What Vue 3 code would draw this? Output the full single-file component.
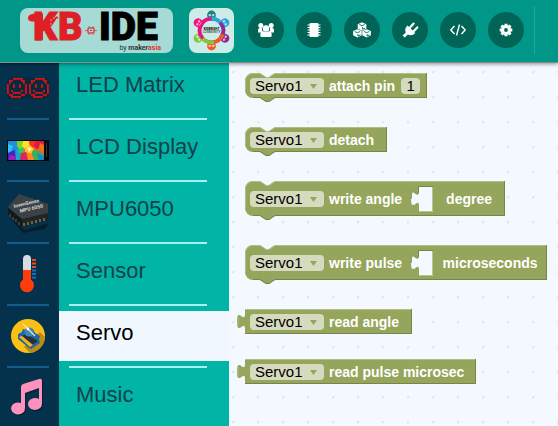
<script setup>
import { ref } from 'vue'

const selected = ref('Servo')
const categories = [
  { name: 'LED Matrix', icon: 'matrix' },
  { name: 'LCD Display', icon: 'lcd' },
  { name: 'MPU6050', icon: 'chip' },
  { name: 'Sensor', icon: 'sensor' },
  { name: 'Servo', icon: 'servo' },
  { name: 'Music', icon: 'music' },
]

const face = [
  '...#####..',
  '.##....##.',
  '.#......#.',
  '#..#..#..#',
  '#..#..#..#',
  '#........#',
  '#.#....#.#',
  '#..####..#',
  '.##....##.',
  '..#####...',
]
const leds = []
face.forEach((row, y) => {
  const line = row + '.' + row
  for (let x = 0; x < line.length; x++) if (line[x] === '#') leds.push({ x: x * 2, y: y * 2 })
})

const people = [
  { angle: 0, color: '#17828a' },
  { angle: 60, color: '#27a9e0' },
  { angle: 120, color: '#92278f' },
  { angle: 180, color: '#f15a24' },
  { angle: 240, color: '#7ac943' },
  { angle: 300, color: '#ed1282' },
]

const blocks = [
  { id: 'attach', x: 16, y: 10, w: 182, h: 25, label: 'attach pin', field: '1' },
  { id: 'detach', x: 16, y: 64, w: 142, h: 25, label: 'detach' },
  { id: 'angle', x: 16, y: 118, w: 260, h: 35, label: 'write angle', socket: true, unit: 'degree' },
  { id: 'pulse', x: 16, y: 182, w: 302, h: 35, label: 'write pulse', socket: true, unit: 'microseconds' },
  { id: 'readAngle', x: 16, y: 246, w: 167, h: 25, label: 'read angle', output: true },
  { id: 'readPulse', x: 16, y: 296, w: 231, h: 25, label: 'read pulse microsec', output: true },
]

function outline(b) {
  if (b.output) return `M0,0 H${b.w} V${b.h} H0 V20 c0,-10 -8,8 -8,-7.5 s8,2.5 8,-7.5 Z`
  return `M0,8 A8,8 0 0 1 8,0 H15 l6,4 h3 l6,-4 H${b.w} V${b.h} H30 l-6,4 h-3 l-6,-4 H8 a8,8 0 0 1 -8,-8 Z`
}
function highlight(b) {
  if (b.output) return `M0,.5 H${b.w - 1} M-7,8 V17`
  return `M.5,${b.h - 8} V8 A7.5,7.5 0 0 1 8,.5 H15 l6,4 h3 l6,-4 H${b.w - 1}`
}
function shade(b) {
  const right = b.w - 0.5
  const bottom = b.h - 0.5
  if (b.output) return `M${right},0 V${bottom} H0`
  return `M${right},0 V${bottom} H30 l-6,4 h-3 l-6,-4 H8`
}
</script>

<template>
  <div class="app">
    <header class="bar">
      <a class="logo" href="#" aria-label="KB-IDE by makerasia">
        <svg viewBox="0 0 153 45">
          <path d="M8 10q0-3 4-4l8-1.500q3-.3 3 2.500v24q0 1.500-1.500 1.500h-5q-1.500 0-1.500-1.500V13.500h-3.500Q8 13 8 10z" fill="#df1f26" />
          <text x="13" y="32" class="kb">K</text>
          <path d="M26 15l6-8 5 3-6 9z" fill="#df1f26" />
          <path d="M28 9l2 1M33 6l1-2M31 14h2M36 9l2 1" stroke="#df1f26" stroke-width="1.500" />
          <circle cx="31" cy="12" r=".8" fill="#f5c9c8" />
          <circle cx="34" cy="10" r=".8" fill="#f5c9c8" />
          <circle cx="31" cy="16" r=".7" fill="#f5c9c8" />
          <text x="38" y="32" class="kb">B</text>
          <g stroke="#df4247" fill="none">
            <rect x="68" y="20" width="6" height="5" rx="1" stroke-width="1.500" />
            <path d="M65 22.500h3M74 22.500h3M69 18v2M73 18v2M69 25v2M73 25v2" stroke-width=".8" />
          </g>
          <rect x="70" y="22" width="2" height="1" fill="#df1f26" />
          <text x="79" y="32" class="ide">IDE</text>
          <text x="141" y="42" class="by">by <tspan class="maker">maker</tspan><tspan class="asia">asia</tspan></text>
        </svg>
      </a>
      <a class="community" href="#" aria-label="Community">
        <svg viewBox="0 0 45 45">
          <g v-for="p in people" :key="p.angle" :transform="`translate(22.5 22.5) rotate(${p.angle})`">
            <path d="M-10.500-5Q-8-12 0-11.500Q6-12 9.500-7" fill="none" :stroke="p.color" stroke-width="3.600" stroke-linecap="round" />
            <circle cx="0" cy="-15.500" r="4.400" :fill="p.color" />
            <rect x="-3" y="-16.500" width="2.600" height="2.200" rx="1" fill="#fff" opacity=".65" />
            <rect x=".4" y="-16.500" width="2.600" height="2.200" rx="1" fill="#fff" opacity=".65" />
            <path d="M-2-13h4" stroke="#fff" stroke-width=".8" opacity=".6" />
          </g>
          <text x="22.500" y="22" class="tiny">KIDBRIGHT</text>
          <text x="22.500" y="25" class="tiny thin">COMMUNITY</text>
        </svg>
      </a>
      <nav class="tools">
        <button aria-label="Community">
          <svg viewBox="0 0 18 16" fill="#fff">
            <circle cx="3.800" cy="3.400" r="2.500" />
            <circle cx="14.200" cy="3.400" r="2.500" />
            <path d="M1 10.500V8q0-2 2-2h2q-.6 2.500.9 4.500zM17 10.500V8q0-2-2-2h-2q.6 2.500-.9 4.500z" />
            <circle cx="9" cy="6.500" r="3.200" />
            <path d="M3.300 13q0-3.700 3-3.700 2.700 1.600 5.400 0 3 0 3 3.700v.5q0 1.500-1.500 1.500H4.800q-1.500 0-1.500-1.500z" />
          </svg>
        </button>
        <button aria-label="Board">
          <svg viewBox="0 0 18 16" fill="#fff">
            <rect x="4.500" y="1" width="9" height="14" rx="1" />
            <path d="M2.500 3h13M2.500 5.500h13M2.500 8h13M2.500 10.500h13M2.500 13h13" stroke="#fff" />
          </svg>
        </button>
        <button aria-label="Packages">
          <svg viewBox="0 0 18 16">
            <g fill="#fff">
              <path d="M9 .3l4.300 1.900v4.500L9 8.700 4.700 6.700V2.200z" />
              <path d="M4.400 7.300l4.300 1.800v4.200l-4.300 2.200-4.300-2.200V9.100z" />
              <path d="M13.600 7.300l4.300 1.800v4.200l-4.300 2.200-4.300-2.200V9.100z" />
            </g>
            <path d="M6.300 2.500L9 3.700l2.700-1.200M9.600 5v2.200l2.500-1.100M1.700 9.500l2.700 1.200 2.700-1.200M5 12v2.100l2.500-1.200M10.900 9.500l2.700 1.200 2.700-1.200M14.200 12v2.100l2.500-1.200" fill="none" stroke="#006557" stroke-width=".9" />
          </svg>
        </button>
        <button aria-label="Plugins">
          <svg viewBox="0 0 18 16">
            <path d="M6.500 3.500l7.800 7.500q-2 2.400-4.600 2.300-1.500 0-2.800-.8l-3.300 3-2-1.900 3.200-3Q3 7 6.500 3.500z" fill="#fff" />
            <path d="M9 5.500l3.600-3.900M12.600 9.200l3.700-3.800" stroke="#fff" stroke-width="2.200" stroke-linecap="round" />
          </svg>
        </button>
        <button aria-label="Code">
          <svg viewBox="0 0 18 16">
            <path d="M5.500 4L1.800 8l3.700 4M12.500 4l3.700 4-3.700 4M10.500 2.500l-3 11" fill="none" stroke="#fff" stroke-width="1.400" />
          </svg>
        </button>
        <button aria-label="Settings">
          <svg viewBox="0 0 18 16">
            <circle cx="9" cy="8" r="3.500" fill="none" stroke="#fff" stroke-width="3.200" />
            <path d="M9 1.700v2M9 12.300v2M2.700 8h2M13.300 8h2M4.500 3.500l1.400 1.400M12.100 11.100l1.400 1.400M4.500 12.500l1.400-1.400M12.100 4.900l1.400-1.400" stroke="#fff" stroke-width="3" />
          </svg>
        </button>
      </nav>
      <span class="divider"></span>
    </header>

    <main class="body">
      <nav class="categories">
        <div v-for="c in categories" :key="c.name" class="row">
          <div class="thumb">
            <svg v-if="c.icon === 'matrix'" viewBox="0 0 42 48">
              <rect y="15" width="42" height="21" rx="3" fill="#062a3e" />
              <rect v-for="(l, i) in leds" :key="i" :x="l.x" :y="l.y + 15" width="1.800" height="1.800" fill="#f30d12" />
            </svg>
            <svg v-else-if="c.icon === 'lcd'" viewBox="0 0 42 48">
              <rect y="15" width="42" height="21" fill="#040608" />
              <g transform="translate(1 16)">
                <path d="M0 0h36v19H0z" fill="#f2641e" />
                <path d="M0 0h10l3 5-5 6-8 2z" fill="#1c8fe0" />
                <path d="M0 3l5 2-2 5-3 2z" fill="#2fc6ea" />
                <path d="M0 12l7-3 4 4-2 6H0z" fill="#4a22c4" />
                <path d="M2 14l5 1 1 4H1z" fill="#a01fb8" />
                <path d="M7 10l6-3 3 5-4 7H8z" fill="#16a8c8" />
                <path d="M9 0h8l1 6-6 3-3-4z" fill="#7fd42a" />
                <path d="M10 9l5-3 2 5-4 3z" fill="#38c85a" />
                <path d="M15 0h7l1 5-5 4-4-4z" fill="#ffe02a" />
                <path d="M21 0h8l-2 6-5 1z" fill="#f8321c" />
                <path d="M28 0h8v6l-8 2-2-3z" fill="#d51c4c" />
                <path d="M32 2l4 2v6l-5-3z" fill="#f2721c" />
                <path d="M17 7l5-3 4 4-3 5-6-2z" fill="#ffc02a" />
                <path d="M19 7l3-1 2 2-3 3z" fill="#fff3a8" />
                <path d="M13 12l5-1 2 8h-8z" fill="#e0245e" />
                <path d="M19 12l5 1 2 6h-6z" fill="#ff8a1c" />
                <path d="M25 9l6 1 5 4v5h-9l-3-5z" fill="#2fb45a" />
                <path d="M29 12l7 3v4h-5z" fill="#1c86c8" />
              </g>
              <path d="M39.500 18v14" stroke="#33363a" />
            </svg>
            <svg v-else-if="c.icon === 'chip'" viewBox="0 0 42 48">
              <path d="M2 30l16 13 24-7-4 6-22 4z" fill="#071d2b" />
              <path d="M1 21v7l14 12v-8z" fill="#14181b" />
              <path d="M15 32v8l26-7v-8z" fill="#202528" />
              <path d="M1 20L12 7l29 10v9l-26 6z" fill="#3b4144" />
              <path d="M17 39v-3M21 38v-3M25 37v-3M29 36v-3M33 35v-3M37 34v-3" stroke="#8b744e" stroke-width="1.500" />
              <path d="M3 30v-3M6 33v-3M9 35v-3M12 38v-3" stroke="#68604e" />
              <g transform="translate(7 21) rotate(-13)">
                <text class="chip-text">InvenSense</text>
                <text class="chip-text" x="5" y="6">MPU 6050</text>
              </g>
            </svg>
            <svg v-else-if="c.icon === 'sensor'" viewBox="0 0 42 48">
              <path d="M16 10a4 4 0 0 1 8 0v16h-8z" fill="#d5dde2" />
              <path d="M16 21h8v9.500a7 7 0 1 1-8 0z" fill="#ff3d0a" />
              <path d="M25 11h4M25 14.500h4M25 18h4" stroke="#f14a22" stroke-width="1.800" />
              <path d="M25 21.500h4M25 25h4M25 28.500h4" stroke="#176bc0" stroke-width="1.800" />
            </svg>
            <svg v-else-if="c.icon === 'servo'" viewBox="0 0 42 48">
              <circle cx="21" cy="25" r="17" fill="#fcc015" />
              <path d="M33 21l5 5a17 17 0 0 1-15 16l-6-6z" fill="#bd8d13" />
              <path d="M11 23l4-2 1-3 3 1 3-2 4 1 2 4 5 3-1 3 1 4-9 6-2-1L11 28z" fill="#1d66a8" />
              <path d="M15 25l4-2 12 7-7 5z" fill="#263238" />
              <path d="M12 26l3-1 11 9-3 2z" fill="#f4b51b" />
              <circle cx="22" cy="21" r="4.500" fill="#3c85bd" />
              <path d="M16 13l12 12" stroke="#f2e7bb" stroke-width="1.200" />
              <circle cx="21" cy="18" r="1.400" fill="#fff" />
            </svg>
            <svg v-else viewBox="0 0 42 48">
              <path d="M14 14q0-2 2-3L32 6q3-1 3 2v23a7 6 0 1 1-3-5V15l-14 5v15a7 6 0 1 1-4-5z" fill="#031f30" transform="translate(1 1)" />
              <path d="M14 14q0-2 2-3L32 6q3-1 3 2v23a7 6 0 1 1-3-5V15l-14 5v15a7 6 0 1 1-4-5z" fill="#ff91bf" />
            </svg>
          </div>
          <button class="category" :class="{ active: selected === c.name }" @click="selected = c.name">{{ c.name }}</button>
        </div>
      </nav>

      <section class="workspace">
        <div v-for="b in blocks" :key="b.id" class="block" :style="{ left: b.x + 'px', top: b.y + 'px', width: b.w + 'px', height: b.h + 'px' }">
          <svg class="shape" :width="b.w" :height="b.h">
            <path :d="outline(b)" fill="#95a55c" />
            <path :d="highlight(b)" fill="none" stroke="#b3bf88" />
            <path :d="shade(b)" fill="none" stroke="#77844a" />
          </svg>
          <span class="pick">
            <select :aria-label="b.label + ' servo'"><option>Servo1</option><option>Servo2</option></select>
            <svg viewBox="0 0 7 5"><path d="M0 0h7L3.500 5z" fill="#95a55c" /></svg>
          </span>
          <span class="label">{{ b.label }}</span>
          <input v-if="b.field" class="field" :value="b.field" aria-label="pin" />
          <svg v-if="b.socket" class="socket" viewBox="0 0 22 26">
            <path d="M8 0H22V26H8V20c0-10-8 8-8-7.500s8 2.500 8-7.500z" fill="#f4f8ff" />
            <path d="M22 .5H7.500V5c0 10-8-8-7 7.500" fill="none" stroke="#77844a" />
            <path d="M21.500 1V25.500H8" fill="none" stroke="#b9c491" />
          </svg>
          <span v-if="b.unit" class="label unit">{{ b.unit }}</span>
        </div>
      </section>
    </main>
  </div>
</template>

<style>
body {
  margin: 0;
  overflow: hidden;
}
</style>

<style scoped>
.app {
  display: flex;
  flex-direction: column;
  height: 100vh;
  overflow: hidden;
  font-family: "Liberation Sans", Arial, sans-serif;
}
.bar {
  display: flex;
  align-items: flex-start;
  flex: none;
  z-index: 1;
  padding: 8px 20px;
  height: 46px;
  background: #009788;
  border-bottom: 1px solid #808d8b;
  box-shadow: 0 1px 4px rgba(0, 0, 0, 0.45);
}
.logo,
.community {
  flex: none;
  border-radius: 8px;
  height: 45px;
  background: #a6dad5;
}
.logo {
  width: 153px;
}
.community {
  width: 45px;
  margin-left: 16px;
  background: #cdebe7;
}
.bar svg {
  display: block;
  overflow: visible;
}
.kb,
.ide {
  font: 900 38px Roboto, sans-serif;
  fill: #df1f26;
  stroke: #df1f26;
  stroke-width: 1px;
}
.ide {
  font-size: 39px;
  fill: #000;
  stroke: #000;
}
.by {
  font: 7px Roboto, sans-serif;
  fill: #333;
  text-anchor: end;
}
.maker,
.asia {
  font-weight: 700;
}
.asia {
  fill: #df3038;
}
.tiny {
  font: 900 3px Roboto, sans-serif;
  text-anchor: middle;
  fill: #111;
}
.thin {
  font-weight: 400;
}
.tools {
  display: flex;
  gap: 12px;
  margin: 4px 10px 0 14px;
}
.tools button {
  display: grid;
  place-items: center;
  width: 36px;
  height: 36px;
  padding: 0;
  border: 0;
  border-radius: 50%;
  background: #006557;
}
.tools svg {
  width: 18px;
  height: 16px;
}
.divider {
  width: 1px;
  height: 48px;
  margin-top: -2px;
  background: #26a699;
}
.body {
  display: flex;
  flex: 1;
  min-height: 0;
}
.categories {
  flex: none;
  width: 229px;
  background: linear-gradient(90deg, #04324c 59px, #00b5a5 59px);
}
.row {
  display: flex;
  height: 62px;
}
.thumb {
  flex: none;
  box-sizing: border-box;
  width: 42px;
  height: 57px;
  margin: 0 10px 0 7px;
  border-bottom: 2px solid #145b89;
}
.thumb svg {
  display: block;
  width: 42px;
  height: 48px;
}
.chip-text {
  font: 700 5px Roboto, sans-serif;
  fill: #d5d8d8;
}
.category {
  position: relative;
  flex: 1;
  height: 50px;
  padding: 0 0 6px 17px;
  border: 0;
  background: transparent;
  color: #143f4c;
  font: 22px "Liberation Sans", Arial, sans-serif;
  text-align: left;
}
.category.active {
  background: #f0f7ff;
  color: #000;
}
.category::after {
  content: "";
  position: absolute;
  left: 10px;
  right: 22px;
  bottom: -7px;
  height: 2px;
  background: #a9eef0;
}
.workspace {
  position: relative;
  flex: 1;
  background: #f4f8ff radial-gradient(circle at 1px 1px, #e2e7f0 1px, transparent 2px) 3px 8px / 25px 25px;
}
.block {
  position: absolute;
  display: flex;
  align-items: center;
  box-sizing: border-box;
  padding-left: 5px;
}
.shape {
  position: absolute;
  left: 0;
  top: 0;
  overflow: visible;
}
.pick {
  position: relative;
  flex: none;
  width: 74px;
  height: 16px;
  margin-right: 5px;
}
.pick select {
  display: block;
  width: 100%;
  height: 16px;
  padding: 0 0 0 5px;
  border: 0;
  border-radius: 4px;
  background: #d5dbbe;
  appearance: none;
  font: 15px/16px "Liberation Sans", Arial, sans-serif;
  color: #000;
}
.pick svg {
  position: absolute;
  right: 7px;
  top: 6px;
  width: 7px;
  height: 5px;
}
.label {
  position: relative;
  color: #fff;
  font-size: 14px;
  font-weight: 700;
  line-height: 16px;
  white-space: nowrap;
}
.field {
  position: relative;
  box-sizing: border-box;
  width: 19px;
  height: 16px;
  margin-left: 6px;
  padding: 0;
  border: 0;
  border-radius: 4px;
  background: #d5dbbe;
  font: 15px/16px "Liberation Sans", Arial, sans-serif;
  text-align: center;
}
.socket {
  position: relative;
  flex: none;
  width: 22px;
  height: 26px;
  margin-left: 9px;
}
.unit {
  flex: 1;
  text-align: center;
}
</style>
